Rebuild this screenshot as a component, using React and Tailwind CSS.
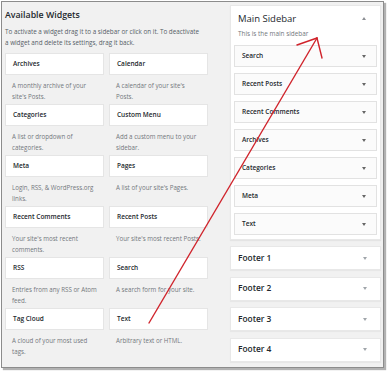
const widgets = [
  { title: "Archives", desc: ["A monthly archive of your", "site's Posts."] },
  { title: "Calendar", desc: ["A calendar of your site's", "Posts."] },
  { title: "Categories", desc: ["A list or dropdown of", "categories."] },
  { title: "Custom Menu", desc: ["Add a custom menu to your", "sidebar."] },
  { title: "Meta", desc: ["Login, RSS, & WordPress.org", "links."] },
  { title: "Pages", desc: ["A list of your site's Pages."] },
  { title: "Recent Comments", desc: ["Your site's most recent", "comments."] },
  { title: "Recent Posts", desc: ["Your site's most recent Posts."] },
  { title: "RSS", desc: ["Entries from any RSS or Atom", "feed."] },
  { title: "Search", desc: ["A search form for your site."] },
  { title: "Tag Cloud", desc: ["A cloud of your most used", "tags."] },
  { title: "Text", desc: ["Arbitrary text or HTML."] },
];

const sidebarItems = ["Search", "Recent Posts", "Recent Comments", "Archives", "Categories", "Meta", "Text"];
const footers = ["Footer 1", "Footer 2", "Footer 3", "Footer 4"];

function Caret({ up, className }) {
  return (
    <svg width="4" height="3" viewBox="0 0 4 3" className={className}>
      {up ? <polygon points="0,3 4,3 2,0" fill="currentColor" /> : <polygon points="0,0 4,0 2,3" fill="currentColor" />}
    </svg>
  );
}

function Widget({ title, desc }) {
  return (
    <div className="flex flex-col h-[51px]">
      <div className="h-[22px] bg-white border border-[#e5e5e5] flex items-center pl-[7px] text-[6.5px] font-semibold text-[#23282d]">
        {title}
      </div>
      <div className="pt-[5px] pl-[7px] text-[6.2px] leading-[11px] text-[#72777c]">
        {desc.map((l) => (
          <div key={l}>{l}</div>
        ))}
      </div>
    </div>
  );
}

export default function App() {
  return (
    <div className="relative w-[388px] h-[371px] bg-white pt-px pl-px">
      <div className="w-[383px] h-[367px] border border-[#8c8c8c] bg-[#f1f1f1] shadow-[2px_2px_1px_rgba(0,0,0,0.3)] flex font-['Open_Sans',sans-serif] pl-[3px]">
        <div className="w-[203px] flex flex-col pt-[7px]">
          <h2 className="text-[8.8px] leading-[12px] font-semibold text-[#23282d]">Available Widgets</h2>
          <p className="mt-[4.5px] text-[6.3px] leading-[11px] text-[#555d66]">
            To activate a widget drag it to a sidebar or click on it. To deactivate
            <br />a widget and delete its settings, drag it back.
          </p>
          <div className="mt-[5.5px] grid grid-cols-2 gap-x-[5px]">
            {widgets.map((w) => (
              <Widget key={w.title} {...w} />
            ))}
          </div>
        </div>
        <div className="ml-[22px] w-[151px] flex flex-col pt-[3px]">
          <div className="bg-white shadow-[0_1px_1px_rgba(0,0,0,0.05)] border border-[#e8e8e8] px-[3px] pb-[4px]">
            <div className="flex items-center justify-between pt-[6.5px] pl-[4px] pr-[11px]">
              <span className="text-[9.5px] leading-[12px] text-[#23282d]">Main Sidebar</span>
              <Caret up className="text-[#8c8f94]" />
            </div>
            <div className="mt-[4px] pl-[4px] text-[6.4px] leading-[9px] text-[#72777c]">This is the main sidebar</div>
            <div className="mt-[7.5px] flex flex-col gap-[6px]">
              {sidebarItems.map((s) => (
                <div
                  key={s}
                  className="h-[22px] bg-[#fbfbfb] border border-[#e2e2e2] flex items-center justify-between pl-[7px] pr-[10px] text-[6.5px] font-semibold text-[#23282d]"
                >
                  <span>{s}</span>
                  <Caret className="text-[#666]" />
                </div>
              ))}
            </div>
          </div>
          <div className="mt-[6px] flex flex-col gap-[6.5px]">
            {footers.map((f) => (
              <div
                key={f}
                className="h-[24px] bg-white border border-[#e8e8e8] shadow-[0_1px_1px_rgba(0,0,0,0.04)] flex items-center justify-between pl-[7px] pr-[13px] text-[8.4px] font-semibold text-[#23282d]"
              >
                <span>{f}</span>
                <Caret className="text-[#a0a5aa]" />
              </div>
            ))}
          </div>
        </div>
      </div>
      <svg className="absolute top-0 left-0 pointer-events-none" width="388" height="371" viewBox="0 0 388 371">
        <g stroke="#d0232b" strokeWidth="1.4" strokeLinecap="round" fill="none">
          <line x1="149" y1="323" x2="317" y2="38" />
          <line x1="317" y1="38" x2="297" y2="45" />
          <line x1="317" y1="38" x2="322" y2="58" />
        </g>
      </svg>
    </div>
  );
}
